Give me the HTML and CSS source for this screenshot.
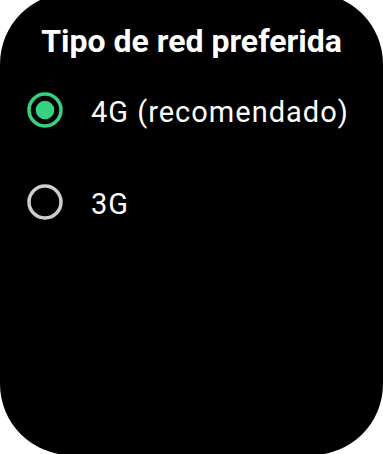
FILE: index.html
```html
<!DOCTYPE html>
<html lang="es">
<head>
<meta charset="utf-8">
<title>Tipo de red preferida</title>
<link rel="stylesheet" href="styles.css">
</head>
<body>
<div class="screen">
  <h1 class="title">Tipo de red preferida</h1>
  <ul class="options">
    <li class="option selected">
      <svg class="radio" width="36" height="36" viewBox="0 0 36 36" aria-hidden="true">
        <circle cx="18" cy="18" r="16" fill="none" stroke="#36d27f" stroke-width="3.5"/>
        <circle cx="18" cy="18" r="9.3" fill="#36d27f"/>
      </svg>
      <span class="label">4G (recomendado)</span>
    </li>
    <li class="option">
      <svg class="radio" width="36" height="36" viewBox="0 0 36 36" aria-hidden="true">
        <circle cx="18" cy="18" r="16" fill="none" stroke="#cdcdcd" stroke-width="3.5"/>
      </svg>
      <span class="label">3G</span>
    </li>
  </ul>
</div>
</body>
</html>
```
FILE: styles.css
```css
html, body {
  margin: 0;
  padding: 0;
  background: #ffffff;
  overflow: hidden;
}

.screen {
  width: 383px;
  height: 462px;
  margin-top: -7px;
  background: #000000;
  border-radius: 71px;
  overflow: hidden;
  font-family: Roboto, "Liberation Sans", sans-serif;
  color: #ffffff;
}

.title {
  margin: 0;
  padding-top: 29px;
  font-size: 32px;
  line-height: 38px;
  font-weight: 700;
  text-align: center;
}

.options {
  list-style: none;
  margin: 0;
  padding: 4px 0 0 0;
}

.option {
  display: flex;
  align-items: center;
  height: 92px;
  padding-left: 27px;
  gap: 28px;
}

.radio {
  flex: none;
  display: block;
}

.label {
  padding-top: 3px;
  font-size: 29px;
  line-height: 32px;
  letter-spacing: 1px;
  font-weight: 400;
  color: #ffffff;
}
```
